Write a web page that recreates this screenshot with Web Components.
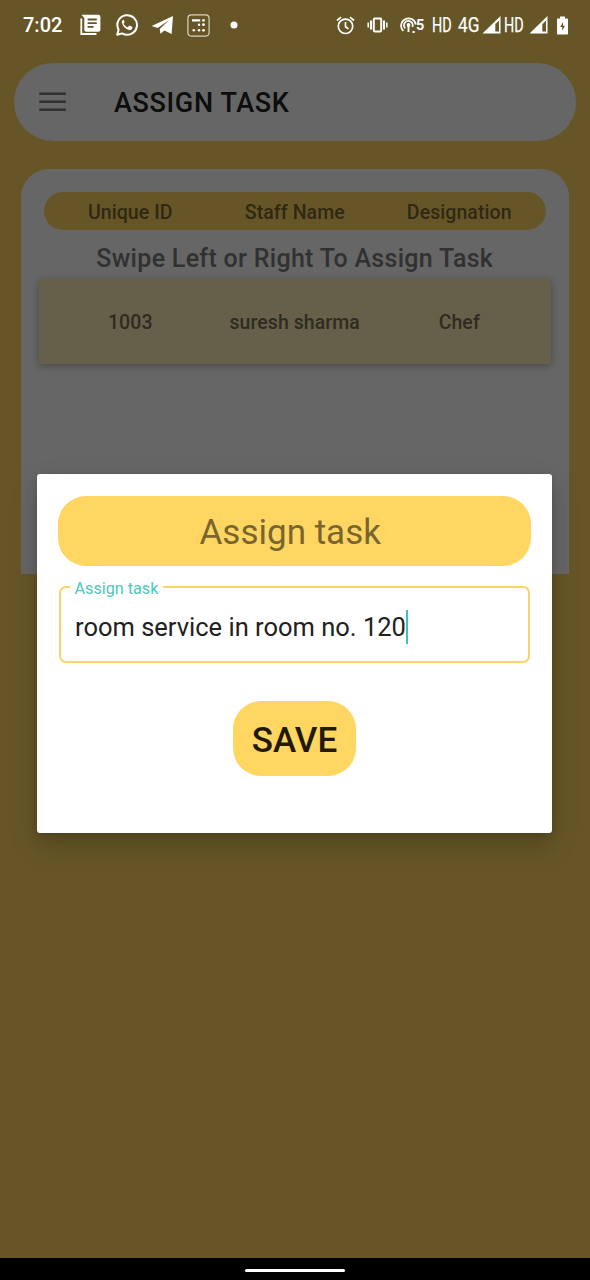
<!DOCTYPE html>
<html lang="en">
<head>
<meta charset="utf-8">
<title>Assign Task</title>
<style>
html,body{margin:0;height:100%}
body{font-family:Roboto,"Liberation Sans",sans-serif;background:#000;overflow:hidden}
</style>
</head>
<body>
<task-app></task-app>
<script>
const define = (name, markup) => {
  const template = document.createElement('template');
  template.innerHTML = markup;
  customElements.define(name, class extends HTMLElement {
    constructor() {
      super();
      this.attachShadow({ mode: 'open' }).append(template.content.cloneNode(true));
    }
  });
};

define('status-bar', `
<style>
:host{display:flex;align-items:center;height:50px;box-sizing:border-box;padding:0 21.500px 0 23px;color:#fff;white-space:nowrap;position:relative;z-index:3}
svg{display:block;flex:none}
.time{font-size:20px;font-weight:500;width:57px}
.left,.right{display:flex;align-items:center}
.right{margin-left:auto}
.narrow{display:block;font-size:20px;line-height:24px;transform-origin:0 50%;transform:translateY(-.5px) scaleX(.72);flex:none;-webkit-text-stroke:.25px #fff}
.five{font-size:14.500px;line-height:18px;font-weight:700;width:8.500px;margin:2px 0 0 -1px}
</style>
<div class="left">
  <span class="time">7:02</span>
  <svg width="22" height="22" viewBox="0 0 22 22"><path d="M1.3 4.500V20h15.200" fill="none" stroke="#fff" stroke-width="1.800"/><path fill="#fff" fill-rule="evenodd" d="M1.400.7h17q2 0 2 2v13q0 2-2 2H6.300q-2 0-2-2V4zM7.600 4.600v1.800h9.200V4.600zM7.600 8.300v1.800h9.200V8.300zM7.600 12v1.800h6V12z"/></svg>
  <svg width="24" height="24" viewBox="0 0 24 24" style="margin-left:12.500px"><path d="M2.200 21.800 3.600 16.700A9.800 9.800 0 1 1 7.200 20.400Z" fill="none" stroke="#fff" stroke-width="2" stroke-linejoin="round"/><path fill="#fff" d="M8.200 6.800c-1.500.8-1.800 2.400-1 4 1.200 2.800 3.300 4.900 6.100 6 1.700.7 3.500.1 4-1.500.3-1 .1-1.300-.3-1.500l-2-1c-.5-.2-.8-.1-1.100.3l-.8 1c-.3.3-.5.3-1 .1-1.400-.7-2.600-1.700-3.400-3.100-.3-.4-.1-.6.2-1 .7-.7.8-1 .5-1.600L8.800 6.900c-.2-.3-.4-.3-.6-.1z"/></svg>
  <svg width="23" height="20" viewBox="0 0 23 20" style="margin-left:12px"><path fill="#fff" d="M.7 11 22 1 20.600 19 13.500 15.500 9.400 18.700 8.700 14 18 5.200 6.600 13z"/></svg>
  <svg width="23" height="23" viewBox="0 0 23 23" style="margin-left:13px"><rect x=".9" y=".9" width="21.200" height="21.200" rx="3.500" fill="none" stroke="#d8d2c2" stroke-width="1.200"/><g fill="#fff"><path d="M5 5.200h8.200v2.200H5zM15.200 5.200H17.800v2.200h-2.600z"/><circle cx="12" cy="10.700" r="1.200"/><circle cx="16.500" cy="10.700" r="1.400"/><circle cx="6.800" cy="16.300" r="1.300"/><circle cx="12" cy="16.300" r="1.300"/><circle cx="16.500" cy="16.300" r="1.400"/></g></svg>
  <svg width="8" height="8" viewBox="0 0 8 8" style="margin-left:20px"><circle cx="4" cy="4" r="3.500" fill="#fff"/></svg>
</div>
<div class="right">
  <svg width="19" height="19" viewBox="0 0 19 19" fill="none" stroke="#fff" stroke-width="1.700"><circle cx="9.500" cy="10.300" r="7.200"/><path d="M9.500 6v4.700l3 2.200M1 4.500 5 1.200M18 4.500 14 1.200"/></svg>
  <svg width="21" height="16" viewBox="0 0 21 16" style="margin-left:12px" fill="none" stroke="#fff"><rect x="6.800" y="1.600" width="7.400" height="12.800" rx=".8" stroke-width="2"/><path d="M4 3.500v9M17 3.500v9" stroke-width="2"/><path d="M1.200 5.500v5M19.800 5.500v5" stroke-width="1.500"/></svg>
  <svg width="17" height="18" viewBox="0 0 17 18" style="margin-left:12.500px" fill="none" stroke="#fff" stroke-width="1.700"><path d="M3.300 15A7.400 7.400 0 1 1 15.800 8.500M5.300 12.300A4.300 4.300 0 1 1 12.300 11"/><path d="M8.500 9v7M12.500 16h2.200" stroke-width="1.900"/><circle cx="8.500" cy="9" r="1.900" fill="#fff" stroke="none"/></svg>
  <span class="five">5</span>
  <span class="narrow" style="width:26px;margin-left:7.500px">HD</span>
  <span class="narrow" style="width:24px;transform:translateY(-.5px) scaleX(.86)">4G</span>
  <svg width="19" height="18" viewBox="0 0 19 18"><path fill="#fff" fill-rule="evenodd" d="M18.500 0v17.500H.5zM17 4.500 13.300 8.200V15.500H17z"/></svg>
  <span class="narrow" style="width:25px;margin-left:3px">HD</span>
  <svg width="19" height="18" viewBox="0 0 19 18"><path fill="#fff" fill-rule="evenodd" d="M18.500 0v17.500H.5zM17 4.500 13.300 8.200V15.500H17z"/></svg>
  <svg width="13" height="19" viewBox="0 0 13 19" style="margin-left:7.500px"><path fill="#fff" fill-rule="evenodd" d="M4 .5h5v2h2.300q.7 0 .7.700v14.600q0 .7-.7.700H1.700q-.7 0-.7-.7V3.200q0-.7.700-.7H4zM7 6 4.200 11h2v3.800L9 9.800H7z"/></svg>
</div>`);

define('app-header', `
<style>
:host{display:flex;align-items:center;height:77.500px;margin:13px 14px 0;box-sizing:border-box;padding-left:25px;background:#fff;border-radius:39px;color:#222}
svg{display:block;margin-right:47px}
h1{margin:2px 0 0;font-size:27px;line-height:32px;font-weight:500;letter-spacing:.65px;white-space:nowrap}
</style>
<svg width="28" height="20" viewBox="0 0 28 20"><path d="M.3 1.700h26.500M.3 9.700h26.500M.3 17.700h26.500" stroke="#767676" stroke-width="2.400"/></svg>
<h1><slot></slot></h1>`);

define('table-row', `
<style>
:host{display:grid;grid-template-columns:repeat(3,164.500px);justify-content:center;align-items:center;text-align:center;box-sizing:border-box;padding-top:2px;font-size:19.500px;font-weight:500;white-space:nowrap;letter-spacing:.07px}
</style><slot></slot>`);

define('staff-card', `
<style>
:host{display:block;box-sizing:border-box;height:405px;margin:28px 21.500px 0 21px;padding:23px;background:#fff;border-radius:28px 28px 0 0}
.head{height:38px;padding-top:3px;background:#ffd762;border-radius:19px;color:#79652e}
p{margin:9px 0 0;height:40px;line-height:40px;font-size:25px;font-weight:500;color:#7c7c7c;text-align:center;white-space:nowrap;letter-spacing:.3px}
.item{height:85px;margin:0 -5px;background:#fff0b9;color:#776d52;box-shadow:0 2px 8px rgba(0,0,0,.3)}
</style>
<table-row class="head"><span>Unique ID</span><span>Staff Name</span><span>Designation</span></table-row>
<p>Swipe Left or Right To Assign Task</p>
<table-row class="item"><span>1003</span><span>suresh sharma</span><span>Chef</span></table-row>`);

define('outlined-field', `
<style>
:host{display:flex;align-items:center;position:relative;box-sizing:border-box;height:77px;margin:20.500px 1px 0;padding:4px 14px 0;border:2px solid #fad36a;border-radius:7px;color:#212121;font-size:25.500px;white-space:nowrap}
.label{position:absolute;left:8.500px;top:-10px;height:22px;line-height:22px;padding:0 5px;background:#fff;color:#4bc8bd;font-size:16.200px}
.caret{width:2px;height:34px;background:#45beb6}
</style>
<span class="label">Assign task</span><slot></slot><span class="caret"></span>`);

define('save-button', `
<style>
:host{display:block;margin:37.500px auto 0}
button{display:block;width:123px;height:75px;padding:4px 0 0;border:0;border-radius:28px;background:#ffd662;color:#211900;font:500 35px Roboto,sans-serif;white-space:nowrap}
</style>
<button><slot></slot></button>`);

define('task-dialog', `
<style>
:host{display:flex;flex-direction:column;width:515px;height:359px;margin:474px 0 0 37px;box-sizing:border-box;padding:21.500px 21px;background:#fff;border-radius:3px;box-shadow:0 12px 28px rgba(0,0,0,.2),0 2px 6px rgba(0,0,0,.12)}
h2{margin:0;height:70px;box-sizing:border-box;padding:2px 8.500px 0 0;line-height:70px;background:#ffd662;border-radius:28px;color:#79662f;font-size:35px;font-weight:400;text-align:center;white-space:nowrap}
</style>
<h2>Assign task</h2>
<outlined-field>room service in room no. 120</outlined-field>
<save-button>SAVE</save-button>`);

define('task-app', `
<style>
:host{display:flex;flex-direction:column;width:590px;height:1280px;position:relative}
main{height:1258px;flex:none;background:#ffd762}
.scrim{position:absolute;inset:0 0 22px;background:rgba(0,0,0,.6);display:flex;align-items:flex-start;overflow:hidden}
nav{flex:1;background:#000;display:flex;justify-content:center;padding-top:10.500px}
nav i{width:100px;height:3.500px;border-radius:2px;background:#fff}
</style>
<main>
  <status-bar></status-bar>
  <app-header>ASSIGN TASK</app-header>
  <staff-card></staff-card>
</main>
<nav><i></i></nav>
<div class="scrim"><task-dialog></task-dialog></div>`);
</script>
</body>
</html>
